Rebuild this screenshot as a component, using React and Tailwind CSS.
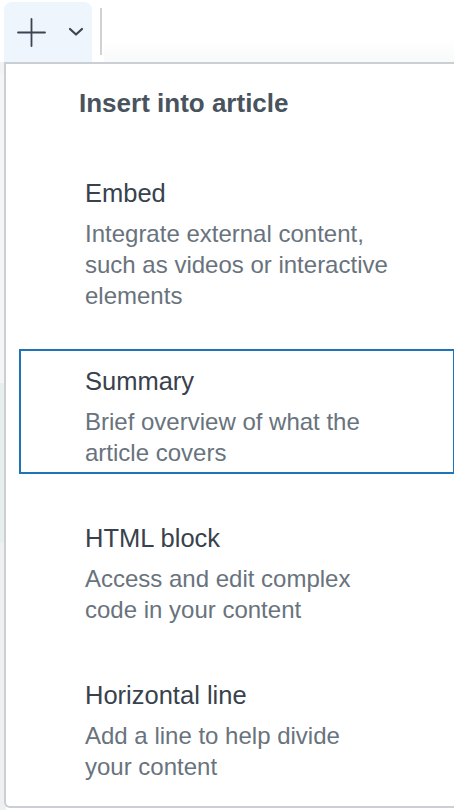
import React from 'react';

const items = [
    { title: 'Embed', desc: ['Integrate external content,', 'such as videos or interactive', 'elements'] },
    { title: 'Summary', desc: ['Brief overview of what the', 'article covers'], active: true },
    { title: 'HTML block', desc: ['Access and edit complex', 'code in your content'] },
    { title: 'Horizontal line', desc: ['Add a line to help divide', 'your content'] },
];

const App = () => {
    return (
        <div className="relative w-[454px] h-[810px] overflow-hidden bg-white font-['Liberation_Sans',Arial,sans-serif]">
            {/* page behind the menu */}
            <div className="absolute left-0 top-[62px] w-[6px] h-[748px] flex flex-col">
                <div className="h-[11px] bg-[#f1f2f3]" />
                <div className="h-[310px] bg-[#f4f5f6]" />
                <div className="h-[160px] bg-[#e6eeee]" />
                <div className="flex-1 bg-[#eef0f1]" />
            </div>

            {/* Toolbar */}
            <div className="relative flex items-start h-[62px] pl-1 pt-[2px]">
                <button className="w-[88px] h-[60px] rounded-t-lg bg-[#eef5fd] flex items-center pl-[12px] gap-[21px]">
                    <svg width="31" height="31" viewBox="0 0 31 31" fill="none" stroke="#3a4551" strokeWidth="1.8" strokeLinecap="round">
                        <path d="M15.5 2v27M2 15.5h27" />
                    </svg>
                    <svg width="16" height="10" viewBox="0 0 16 10" fill="none" stroke="#3a4551" strokeWidth="2.2" strokeLinecap="round" strokeLinejoin="round">
                        <path d="M2 2l6 5.5L14 2" />
                    </svg>
                </button>
                <div className="ml-2 mt-[6px] w-[2px] h-[47px] bg-[#cfd1d3]" />
                <div className="ml-[2px] mt-[38px] flex-1 h-[22px] bg-gradient-to-b from-white to-[#f8f9fa]" />
            </div>

            {/* Menu */}
            <div className="relative ml-1 w-[480px] h-[746px] border-l-2 border-t-2 border-b-2 border-[#cbcfd3] rounded-bl-md bg-white pt-[23px]">
                <div className="pl-[73px] text-[26px] leading-[32px] font-bold text-[#49535e]">
                    Insert into article
                </div>
                <div className="mt-[42px] ml-[13px] flex flex-col gap-[32px]">
                    {items.map((item) => (
                        <div
                            key={item.title}
                            className={`w-[436px] border-2 pl-[64px] pt-[14px] pb-[4px] ${item.active ? 'border-[#1f73b7]' : 'border-transparent'}`}
                        >
                            <div className="text-[25.5px] leading-[32px] text-[#38424d]">{item.title}</div>
                            <div className="mt-[9px] text-[24px] leading-[31px] text-[#68737d]">
                                {item.desc.map((line) => (
                                    <div key={line}>{line}</div>
                                ))}
                            </div>
                        </div>
                    ))}
                </div>
            </div>
        </div>
    );
};

export default App;
